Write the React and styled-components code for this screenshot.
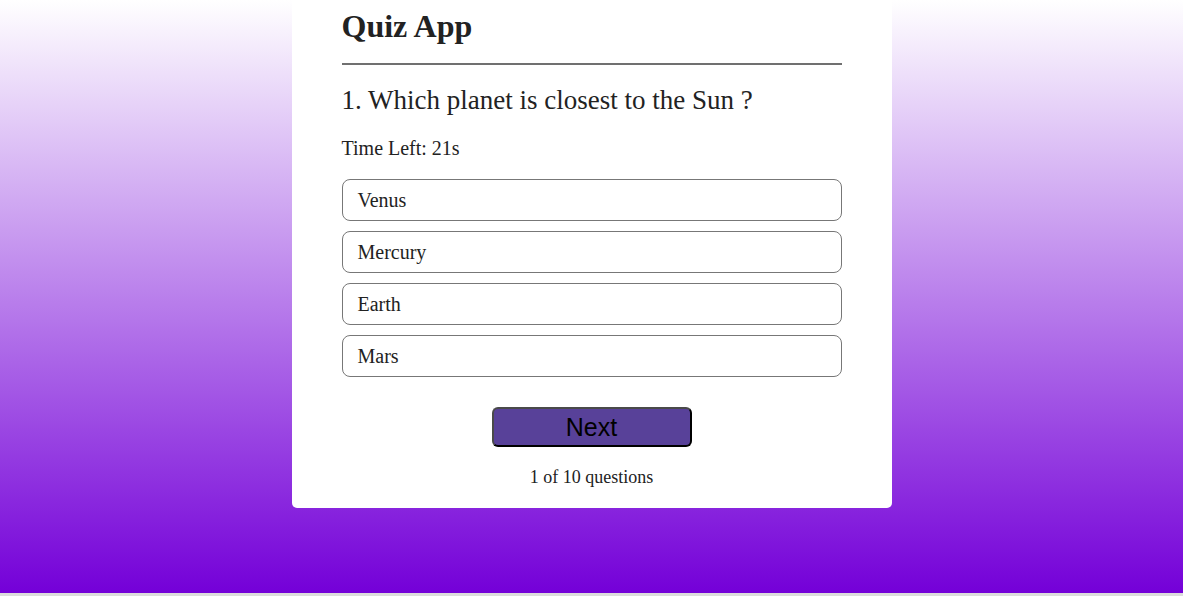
import React from "react";
import styled, { createGlobalStyle } from "styled-components";

const Global = createGlobalStyle`
  html { background: #dcdcdc; }
  body {
    margin: 0;
    font-family: "Liberation Serif", "Times New Roman", serif;
    color: #222;
  }
`;

const Page = styled.div`
  min-height: 593px;
  background: linear-gradient(to bottom, #ffffff 0%, #7400d8 100%);
  display: flex;
  justify-content: center;
  align-items: flex-start;
`;

const Card = styled.div`
  width: 600px;
  box-sizing: border-box;
  background: #fff;
  border-radius: 0 0 5px 5px;
  padding: 8px 50px 20px;
`;

const Title = styled.h1`
  margin: 0;
  font-size: 32px;
  font-weight: 700;
  line-height: 37px;
`;

const Rule = styled.hr`
  margin: 18px 0 0;
  border: none;
  height: 2px;
  background: #707070;
`;

const Question = styled.h2`
  margin: 20px 0 0;
  font-size: 27px;
  font-weight: 400;
  line-height: 31px;
`;

const Timer = styled.p`
  margin: 21px 0 0;
  font-size: 20px;
  line-height: 23px;
`;

const Options = styled.ul`
  list-style: none;
  margin: 19px 0 0;
  padding: 0;
  display: flex;
  flex-direction: column;
  gap: 10px;
`;

const Option = styled.li`
  box-sizing: border-box;
  height: 42px;
  border: 1px solid #777;
  border-radius: 8px;
  padding: 0 15px;
  display: flex;
  align-items: center;
  font-size: 20px;
`;

const NextButton = styled.button`
  display: block;
  margin: 30px auto 0;
  width: 200px;
  height: 40px;
  background: #584199;
  border: 2px solid;
  border-color: #4a4a4a #000 #000 #4a4a4a;
  border-radius: 6px;
  font-family: "Liberation Sans", Arial, sans-serif;
  font-size: 25px;
  color: #000;
  padding: 0;
`;

const Progress = styled.p`
  margin: 20px 0 0;
  text-align: center;
  font-size: 18px;
  line-height: 21px;
`;

const options = ["Venus", "Mercury", "Earth", "Mars"];

export default function App() {
  return (
    <>
      <Global />
      <Page>
        <Card>
          <Title>Quiz App</Title>
          <Rule />
          <Question>1. Which planet is closest to the Sun ?</Question>
          <Timer>Time Left: 21s</Timer>
          <Options>
            {options.map((o) => (
              <Option key={o}>{o}</Option>
            ))}
          </Options>
          <NextButton>Next</NextButton>
          <Progress>1 of 10 questions</Progress>
        </Card>
      </Page>
    </>
  );
}
